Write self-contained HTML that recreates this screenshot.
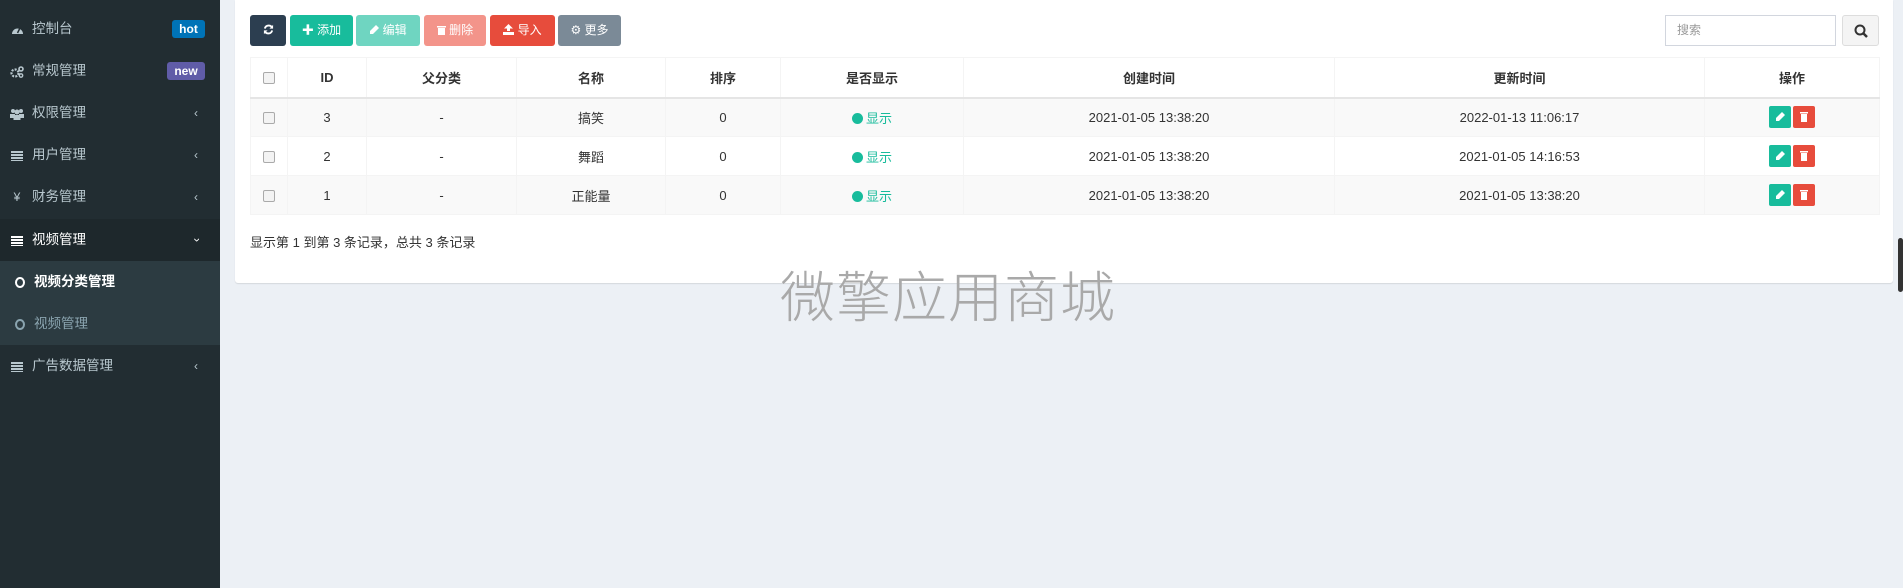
<!DOCTYPE html>
<html><head><meta charset="utf-8">
<style>
*{box-sizing:border-box;margin:0;padding:0}
body{width:1903px;height:588px;overflow:hidden;background:#ecf0f5;font-family:"Liberation Sans","Noto Sans CJK SC",sans-serif;font-size:13px;color:#333;position:relative}
.side{position:absolute;left:0;top:0;width:220px;height:588px;background:#222d32}
.mi{position:absolute;left:0;width:220px;height:42px;color:#b8c7ce;font-size:13.5px;line-height:42px}
.mi .ic{position:absolute;left:10px;top:0;width:14px;text-align:center;font-size:12px}
.mi .ic svg{vertical-align:middle}
.mi .tx{position:absolute;left:32px}
.mi .ch{position:absolute;left:194px;font-size:12px}
.badge{position:absolute;top:12px;height:18px;line-height:18px;color:#fff;font-weight:bold;font-size:12px;border-radius:3px;text-align:center}
.lines{display:inline-block;width:12px;height:10px;vertical-align:middle;background:repeating-linear-gradient(#b8c7ce 0 2px,transparent 2px 3px)}
.sub{position:absolute;left:0;top:261px;width:220px;height:84px;background:#2c3b41}
.panel{position:absolute;left:235px;top:0;width:1658px;height:283px;background:#fff;border-radius:0 0 3px 3px;box-shadow:0 1px 1px rgba(0,0,0,.1)}
.btn{position:absolute;top:15px;height:31px;line-height:31px;color:#fff;font-size:12px;text-align:center;border-radius:3px}
.btn svg{vertical-align:-1px}
table{position:absolute;left:250px;top:57px;width:1629px;border-collapse:collapse;table-layout:fixed}
td,th{border:1px solid #f4f4f4;text-align:center;height:39px;font-size:13px}
th{height:40px;border-bottom:2px solid #e5e5e5;font-weight:bold}
tr.o td{background:#f9f9f9}
.cb{display:inline-block;width:12px;height:12px;border:1px solid #aaa;border-radius:2px;background:#f3f3f3;vertical-align:middle}
.g{color:#18bc9c}
.dot{display:inline-block;width:11px;height:11px;border-radius:50%;background:#18bc9c;vertical-align:-1px;margin-right:3px}
.ab{display:inline-block;width:22px;height:22px;border-radius:2px;vertical-align:middle;margin:0 1px}
.ab svg{display:block}
</style></head><body>
<div class="side">
 <div class="mi" style="top:8px"><span class="ic"><svg width="13" height="11" viewBox="0 0 13 11"><path d="M1 10A5.5 5.5 0 1 1 12 10Z" fill="#b8c7ce"/><path d="M6.5 9L9 4" stroke="#222d32" stroke-width="1.5"/></svg></span><span class="tx">控制台</span><span class="badge" style="left:172px;width:33px;background:#0073b7">hot</span></div>
 <div class="mi" style="top:50px"><span class="ic"><svg width="14" height="12" viewBox="0 0 14 12"><circle cx="5" cy="7" r="3.5" fill="none" stroke="#b8c7ce" stroke-width="2.2" stroke-dasharray="2 1.2"/><circle cx="11" cy="3" r="2" fill="none" stroke="#b8c7ce" stroke-width="1.6"/><circle cx="11" cy="9.5" r="1.7" fill="none" stroke="#b8c7ce" stroke-width="1.4"/></svg></span><span class="tx">常规管理</span><span class="badge" style="left:167px;width:38px;background:#605ca8">new</span></div>
 <div class="mi" style="top:92px"><span class="ic"><svg width="14" height="12" viewBox="0 0 14 12"><circle cx="3" cy="3" r="2" fill="#b8c7ce"/><circle cx="11" cy="3" r="2" fill="#b8c7ce"/><circle cx="7" cy="4" r="2.5" fill="#b8c7ce"/><rect x="0" y="6" width="5" height="4" fill="#b8c7ce"/><rect x="9" y="6" width="5" height="4" fill="#b8c7ce"/><rect x="3.5" y="7" width="7" height="5" fill="#b8c7ce"/></svg></span><span class="tx">权限管理</span><span class="ch">‹</span></div>
 <div class="mi" style="top:134px"><span class="ic"><i class="lines"></i></span><span class="tx">用户管理</span><span class="ch">‹</span></div>
 <div class="mi" style="top:176px"><span class="ic">¥</span><span class="tx">财务管理</span><span class="ch">‹</span></div>
 <div class="mi" style="top:219px;background:#1e282c;color:#fff"><span class="ic"><i class="lines" style="background:repeating-linear-gradient(#fff 0 2px,transparent 2px 3px)"></i></span><span class="tx">视频管理</span><span class="ch" style="transform:rotate(-90deg)">‹</span></div>
 <div class="sub"></div>
 <div class="mi" style="top:261px;color:#fff;font-weight:bold"><span class="ic" style="left:13px"><i style="display:inline-block;width:10px;height:11px;border:2px solid #fff;border-radius:50%;vertical-align:middle"></i></span><span class="tx" style="left:34px">视频分类管理</span></div>
 <div class="mi" style="top:303px;color:#8aa4af"><span class="ic" style="left:13px"><i style="display:inline-block;width:10px;height:11px;border:2px solid #8aa4af;border-radius:50%;vertical-align:middle"></i></span><span class="tx" style="left:34px">视频管理</span></div>
 <div class="mi" style="top:345px"><span class="ic"><i class="lines"></i></span><span class="tx">广告数据管理</span><span class="ch">‹</span></div>
</div>
<div class="panel"></div>
<div class="btn" style="left:250px;width:36px;background:#2c3e50"><svg width="11" height="11" viewBox="0 0 12 12"><path d="M10 4A4.3 4.3 0 0 0 2 5M2 8A4.3 4.3 0 0 0 10 7" fill="none" stroke="#fff" stroke-width="2"/><path d="M11 1v4H7z M1 11V7h4z" fill="#fff"/></svg></div>
<div class="btn" style="left:290px;width:63px;background:#18bc9c"><b>✚</b> 添加</div>
<div class="btn" style="left:356px;width:64px;background:#6fd5c1"><svg width="10" height="10" viewBox="0 0 10 10"><path d="M7 0l3 3-6 6H1V6z" fill="#fff"/></svg> 编辑</div>
<div class="btn" style="left:424px;width:62px;background:#f3948a"><svg width="9" height="10" viewBox="0 0 9 10"><rect x="0" y="1" width="9" height="1.5" fill="#fff"/><rect x="1" y="3" width="7" height="7" fill="#fff"/></svg> 删除</div>
<div class="btn" style="left:490px;width:65px;background:#e74c3c"><svg width="11" height="11" viewBox="0 0 11 11"><path d="M5.5 0L10 4.5H7V7H4V4.5H1z M0 8h11v3H0z" fill="#fff"/></svg> 导入</div>
<div class="btn" style="left:558px;width:63px;background:#7b8a97">⚙ 更多</div>
<div style="position:absolute;left:1665px;top:15px;width:171px;height:31px;border:1px solid #d2d6de;color:#999;font-size:12px;line-height:29px;padding-left:11px">搜索</div>
<div style="position:absolute;left:1842px;top:15px;width:37px;height:31px;border:1px solid #ddd;background:#f4f4f4;border-radius:3px">
<svg width="37" height="31" viewBox="0 0 37 31"><circle cx="17" cy="14" r="4.5" fill="none" stroke="#333" stroke-width="2"/><path d="M20 17l4 4" stroke="#333" stroke-width="2.5"/></svg></div>
<table>
<colgroup><col style="width:37px"><col style="width:79px"><col style="width:150px"><col style="width:149px"><col style="width:115px"><col style="width:183px"><col style="width:371px"><col style="width:370px"><col style="width:175px"></colgroup>
<tr><th><i class="cb"></i></th><th>ID</th><th>父分类</th><th>名称</th><th>排序</th><th>是否显示</th><th>创建时间</th><th>更新时间</th><th>操作</th></tr>
<tr class="o"><td><i class="cb"></i></td><td>3</td><td>-</td><td>搞笑</td><td>0</td><td class="g"><i class="dot"></i>显示</td><td>2021-01-05 13:38:20</td><td>2022-01-13 11:06:17</td><td><i class="ab" style="background:#18bc9c"><svg width="22" height="22"><path d="M13 6l3 3-6 6H7v-3z" fill="#fff"/></svg></i><i class="ab" style="background:#e74c3c"><svg width="22" height="22"><rect x="7" y="6" width="8" height="1.5" fill="#fff"/><rect x="8" y="8" width="6" height="8" fill="#fff"/></svg></i></td></tr>
<tr><td><i class="cb"></i></td><td>2</td><td>-</td><td>舞蹈</td><td>0</td><td class="g"><i class="dot"></i>显示</td><td>2021-01-05 13:38:20</td><td>2021-01-05 14:16:53</td><td><i class="ab" style="background:#18bc9c"><svg width="22" height="22"><path d="M13 6l3 3-6 6H7v-3z" fill="#fff"/></svg></i><i class="ab" style="background:#e74c3c"><svg width="22" height="22"><rect x="7" y="6" width="8" height="1.5" fill="#fff"/><rect x="8" y="8" width="6" height="8" fill="#fff"/></svg></i></td></tr>
<tr class="o"><td><i class="cb"></i></td><td>1</td><td>-</td><td>正能量</td><td>0</td><td class="g"><i class="dot"></i>显示</td><td>2021-01-05 13:38:20</td><td>2021-01-05 13:38:20</td><td><i class="ab" style="background:#18bc9c"><svg width="22" height="22"><path d="M13 6l3 3-6 6H7v-3z" fill="#fff"/></svg></i><i class="ab" style="background:#e74c3c"><svg width="22" height="22"><rect x="7" y="6" width="8" height="1.5" fill="#fff"/><rect x="8" y="8" width="6" height="8" fill="#fff"/></svg></i></td></tr>
</table>
<div style="position:absolute;left:250px;top:232px;font-size:13px">显示第 1 到第 3 条记录，总共 3 条记录</div>
<div style="position:absolute;left:780px;top:258px;font-size:55px;line-height:70px;color:#a9a9a9;font-family:'Noto Sans CJK SC',sans-serif;font-weight:300;letter-spacing:1px">微擎应用商城</div>
<div style="position:absolute;left:1898px;top:238px;width:5px;height:54px;background:#333;border-radius:3px"></div>
</body></html>
